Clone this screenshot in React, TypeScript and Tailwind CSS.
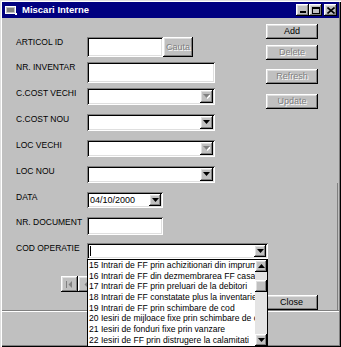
import React from "react";

const sunken =
  "shadow-[inset_1px_1px_0_#808080,inset_-1px_-1px_0_#ffffff,inset_2px_2px_0_#000000,inset_-2px_-2px_0_#dfdfdf]";
const raised =
  "shadow-[inset_-1px_-1px_0_#000000,inset_1px_1px_0_#ffffff,inset_-2px_-2px_0_#808080,inset_2px_2px_0_#dfdfdf]";
const disabledText = "text-[#808080] [text-shadow:1px_1px_0_#ffffff]";

function Arrow({ disabled }: { disabled?: boolean }) {
  return (
    <svg width="7" height="5" viewBox="0 0 7 5">
      {disabled && <polygon points="1,1 8,1 4.5,5" fill="#ffffff" />}
      <polygon points="0,0 7,0 3.5,4" fill={disabled ? "#808080" : "#000000"} />
    </svg>
  );
}

function DropBtn({ disabled, w = "w-[12px]" }: { disabled?: boolean; w?: string }) {
  return (
    <div className={`${raised} ${w} h-full bg-[#c0c0c0] flex items-center justify-center`}>
      <Arrow disabled={disabled} />
    </div>
  );
}

function Combo({ disabled }: { disabled?: boolean }) {
  return (
    <div className={`${sunken} bg-white w-[128px] h-[17px] p-[2px] flex justify-end`}>
      <DropBtn disabled={disabled} w="w-[13px]" />
    </div>
  );
}

function Btn({ label, disabled, w = "w-[52px]", h = "h-[15px]" }: { label: string; disabled?: boolean; w?: string; h?: string }) {
  return (
    <div
      className={`${raised} ${w} ${h} bg-[#c0c0c0] flex items-center justify-center text-[9px] leading-none ${
        disabled ? disabledText : "text-black"
      }`}
    >
      {label}
    </div>
  );
}

function Row({ label, mt, h, children }: { label: string; mt: string; h: string; children: React.ReactNode }) {
  return (
    <div className={`flex items-start ${mt} ${h}`}>
      <div className="w-[71px] text-[8.5px] leading-[11px] text-black whitespace-nowrap">{label}</div>
      {children}
    </div>
  );
}

const items = [
  "15 Intrari de FF prin achizitionari din imprumuturi",
  "16 Intrari de FF din dezmembrarea FF casate",
  "17 Intrari de FF prin preluari de la debitori",
  "18 Intrari de FF constatate plus la inventariere",
  "19 Intrari de FF prin schimbare de cod",
  "20 Iesiri de mijloace fixe prin schimbare de cod",
  "21 Iesiri de fonduri fixe prin vanzare",
  "22 Iesiri de FF prin distrugere la calamitati",
];

function ScrollArrow({ up }: { up?: boolean }) {
  return (
    <div className={`${raised} w-[12px] h-[12px] bg-[#c0c0c0] flex items-center justify-center`}>
      <svg width="7" height="4" viewBox="0 0 7 4">
        <polygon points={up ? "0,4 7,4 3.5,0" : "0,0 7,0 3.5,4"} fill="#000" />
      </svg>
    </div>
  );
}

export default function App() {
  return (
    <div className="w-[341px] h-[347px] overflow-hidden bg-[#c0c0c0] p-[2px] flex flex-col font-['Liberation_Sans',Arial,sans-serif] shadow-[inset_1px_1px_0_#dfdfdf,inset_2px_2px_0_#ffffff,inset_-1px_-1px_0_#000000,inset_-2px_-2px_0_#808080]">
      {/* Title bar */}
      <div className="h-[16px] bg-[#000080] flex items-center pl-[3px] pr-[2px] shrink-0">
        <svg width="13" height="11" viewBox="0 0 13 11" className="shrink-0">
          <rect x="0.5" y="1.5" width="10" height="7" fill="#c0c0c0" stroke="#ffffff" />
          <rect x="2" y="3" width="7" height="4" fill="#808080" />
          <rect x="10" y="8" width="2" height="2" fill="#ffffff" />
        </svg>
        <span className="ml-[4px] text-white font-bold text-[9.5px] leading-none">Miscari Interne</span>
        <div className="ml-auto flex items-center">
          <div className={`${raised} w-[13px] h-[12px] bg-[#c0c0c0] flex items-end justify-center pb-[3px]`}>
            <div className="w-[6px] h-[2px] bg-black" />
          </div>
          <div className={`${raised} w-[13px] h-[12px] bg-[#c0c0c0] flex items-center justify-center`}>
            <div className="w-[8px] h-[7px] border border-black border-t-2" />
          </div>
          <div className={`${raised} ml-[2px] w-[13px] h-[12px] bg-[#c0c0c0] flex items-center justify-center`}>
            <svg width="8" height="7" viewBox="0 0 8 7">
              <path d="M0.5 0.5 L7.5 6.5 M7.5 0.5 L0.5 6.5" stroke="#000" strokeWidth="1.6" />
            </svg>
          </div>
        </div>
      </div>

      {/* Top section */}
      <div className="flex items-start shrink-0">
        <div className="flex flex-col pl-[14px]">
          <Row label="ARTICOL ID" mt="mt-[19px]" h="h-[20px]">
            <div className="flex">
              <div className={`${sunken} bg-white w-[76px] h-[20px]`} />
              <Btn label="Cauta" disabled w="w-[30px]" h="h-[20px]" />
            </div>
          </Row>
          <Row label="NR. INVENTAR" mt="mt-[5px]" h="h-[21px]">
            <div className={`${sunken} bg-white w-[128px] h-[21px]`} />
          </Row>
          <Row label="C.COST VECHI" mt="mt-[5px]" h="h-[17px]">
            <Combo disabled />
          </Row>
          <Row label="C.COST NOU" mt="mt-[9px]" h="h-[17px]">
            <Combo />
          </Row>
          <Row label="LOC VECHI" mt="mt-[9px]" h="h-[17px]">
            <Combo disabled />
          </Row>
          <Row label="LOC NOU" mt="mt-[9px]" h="h-[17px]">
            <Combo />
          </Row>
        </div>
        <div className="ml-auto mr-[21px] flex flex-col">
          <div className="mt-[6px]"><Btn label="Add" /></div>
          <div className="mt-[6px]"><Btn label="Delete" disabled /></div>
          <div className="mt-[9px]"><Btn label="Refresh" disabled /></div>
          <div className="mt-[10px]"><Btn label="Update" disabled /></div>
        </div>
      </div>

      {/* Lower section */}
      <div className="mr-[1px] border-r border-[#808080] flex flex-col shrink-0">
        <div className="flex flex-col pl-[14px]">
          <Row label="DATA" mt="mt-[9px]" h="h-[16px]">
            <div className={`${sunken} bg-white w-[76px] h-[16px] p-[2px] flex items-center`}>
              <span className="pl-[1px] text-[9px] leading-none text-black">04/10/2000</span>
              <div className="ml-auto h-full"><DropBtn /></div>
            </div>
          </Row>
          <Row label="NR. DOCUMENT" mt="mt-[9px]" h="h-[18px]">
            <div className={`${sunken} bg-white w-[76px] h-[18px]`} />
          </Row>
          <Row label="COD OPERATIE" mt="mt-[8px]" h="h-[16px]">
            <div className="relative">
              <div className={`${sunken} bg-white w-[181px] h-[16px] p-[2px] flex items-center`}>
                <div className="ml-[1px] w-[1px] h-[10px] bg-black" />
                <div className="ml-auto h-full"><DropBtn /></div>
              </div>
              <div className="absolute left-0 top-full z-10 w-[181px] h-[88px] bg-white border border-black flex">
                <div className="flex-1 overflow-hidden">
                  {items.map((t) => (
                    <div key={t} className="h-[10.7px] leading-[10.7px] pl-[1px] text-[8.6px] text-black whitespace-nowrap">
                      {t}
                    </div>
                  ))}
                </div>
                <div className="w-[12px] bg-[#e4e4e4] flex flex-col">
                  <ScrollArrow up />
                  <div className={`${raised} mt-[8px] w-[12px] h-[12px] bg-[#c0c0c0]`} />
                  <div className="flex-1" />
                  <ScrollArrow />
                </div>
              </div>
            </div>
          </Row>
        </div>

        <div className="flex items-start h-[51px]">
          <div className="ml-[59px] mt-[17px] flex">
            <div className={`${raised} w-[17px] h-[16px] bg-[#c0c0c0] flex items-center justify-center`}>
              <svg width="7" height="7" viewBox="0 0 7 7">
                <rect x="0" y="0" width="1" height="7" fill="#808080" />
                <polygon points="6,0 6,7 2.5,3.5" fill="#808080" />
              </svg>
            </div>
            <div className={`${raised} w-[17px] h-[16px] bg-[#c0c0c0] flex items-center justify-center`}>
              <svg width="5" height="7" viewBox="0 0 5 7">
                <polygon points="4,0 4,7 0.5,3.5" fill="#808080" />
              </svg>
            </div>
            <div className={`${raised} w-[17px] h-[16px] bg-[#c0c0c0]`} />
            <div className={`${raised} w-[17px] h-[16px] bg-[#c0c0c0]`} />
          </div>
          <div className="ml-auto mr-[19px] mt-[36px]">
            <Btn label="Close" w="w-[53px]" />
          </div>
        </div>
      </div>

      {/* Bottom strip */}
      <div className="flex-1 border-t border-[#808080] shadow-[inset_0_1px_0_#ffffff]" />
    </div>
  );
}
